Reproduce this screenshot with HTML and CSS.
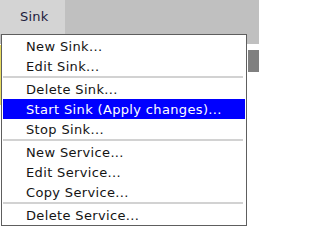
FILE: index.html
```html
<!DOCTYPE html>
<html>
<head>
<meta charset="utf-8">
<link rel="stylesheet" href="styles.css">
</head>
<body>
<div class="page">
  <div class="topbar">
    <div class="tab">Sink</div>
  </div>
  <div class="below">
    <div class="sliver"></div>
    <div class="block"></div>
  </div>
  <div class="menu">
    <div class="item">New Sink...</div>
    <div class="item">Edit Sink...</div>
    <div class="sep"></div>
    <div class="item">Delete Sink...</div>
    <div class="item active">Start Sink (Apply changes)...</div>
    <div class="item">Stop Sink...</div>
    <div class="sep"></div>
    <div class="item">New Service...</div>
    <div class="item">Edit Service...</div>
    <div class="item">Copy Service...</div>
    <div class="sep"></div>
    <div class="item">Delete Service...</div>
  </div>
</div>
</body>
</html>
```
FILE: styles.css
```css
html, body {
  margin: 0;
  padding: 0;
  background: #ffffff;
}
.page {
  position: relative;
  width: 259px;
  height: 238px;
  overflow: hidden;
  font-family: "DejaVu Sans", Verdana, sans-serif;
  font-size: 13px;
}
.topbar {
  height: 44px;
  background: #c0c0c0;
  display: flex;
}
.tab {
  width: 45px;
  height: 35px;
  padding-left: 20px;
  background: #d4d4d4;
  color: #1c1c3c;
  line-height: 36px;
  margin-top: -1px;
  letter-spacing: 0.2px;
}
.below {
  display: flex;
  justify-content: space-between;
  align-items: flex-start;
}
.sliver {
  width: 1px;
  height: 60px;
  margin-top: 1px;
  background: #e8dc60;
}
.block {
  width: 11px;
  height: 22px;
  margin-top: 6px;
  background: #808080;
}
.menu {
  position: absolute;
  left: 1px;
  top: 34px;
  width: 242px;
  padding: 1px 1px 0 1px;
  border: 1px solid #5e5e5e;
  background: #ffffff;
  display: flex;
  flex-direction: column;
}
.item {
  height: 20px;
  line-height: 21px;
  padding-left: 23px;
  color: #141414;
  white-space: nowrap;
  letter-spacing: 0.35px;
}
.item.active {
  background: #0000ff;
  color: #ffffff;
}
.sep {
  height: 2px;
  margin: 0 2px 1px 0;
  background: #d2d2d2;
}
```
